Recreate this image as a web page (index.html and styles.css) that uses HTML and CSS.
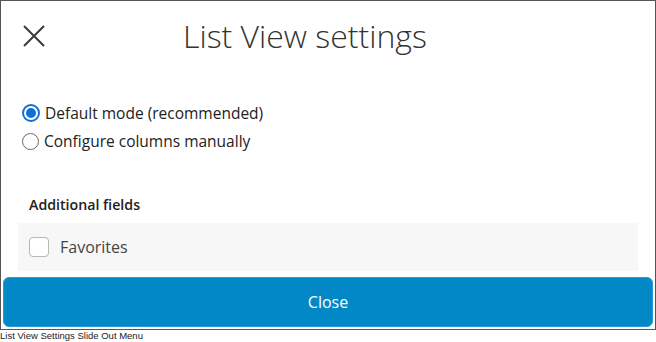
FILE: index.html
```html
<!DOCTYPE html>
<html>
<head>
<meta charset="utf-8">
<link rel="stylesheet" href="styles.css">
</head>
<body>
<div class="frame">
  <div class="header">
    <button class="close-x" aria-label="Close">
      <svg width="22" height="22" viewBox="0 0 22 22"><path d="M1 1L21 21M21 1L1 21" stroke="#3a3a3a" stroke-width="2" fill="none"/></svg>
    </button>
    <h1 class="title">List View settings</h1>
  </div>
  <div class="radios">
    <label class="radio-row"><span class="radio checked"></span><span>Default mode (recommended)</span></label>
    <label class="radio-row"><span class="radio"></span><span>Configure columns manually</span></label>
  </div>
  <div class="section-title">Additional fields</div>
  <div class="field-row"><span class="checkbox"></span><span class="field-label">Favorites</span></div>
  <button class="close-btn">Close</button>
</div>
<div class="caption">List View Settings Slide Out Menu</div>
</body>
</html>
```
FILE: styles.css
```css
html, body { margin: 0; padding: 0; background: #fff; }
body { font-family: "Open Sans", sans-serif; color: #333; }
.frame {
  width: 656px; height: 330px; box-sizing: border-box;
  border: 1px solid #555;
  display: flex; flex-direction: column;
}
.header { margin-top: 15px; height: 40px; display: flex; align-items: center; padding-left: 22px; }
.close-x { border: 0; background: none; padding: 0; width: 22px; height: 22px; display: flex; }
.title { margin: 0 0 0 138px; font-size: 32px; font-weight: 300; line-height: 40px; color: #333; }
.radios { margin-top: 43px; padding-left: 21px; display: flex; flex-direction: column; }
.radio-row { height: 28px; display: flex; align-items: center; font-size: 15.5px; line-height: 28px; color: #222; }
.radio { width: 15px; height: 15px; border: 1.5px solid #666; border-radius: 50%; margin-right: 5px; box-sizing: content-box; flex: none; }
.radio.checked { border: 2px solid #1170d8; width: 14px; height: 14px; position: relative; }
.radio.checked::after { content: ""; position: absolute; left: 2px; top: 2px; width: 10px; height: 10px; border-radius: 50%; background: #1170d8; }
.section-title { margin-top: 40px; padding-left: 28px; font-size: 14.2px; font-weight: 600; line-height: 20px; color: #222; }
.field-row { margin: 8px 17px 0; height: 48px; background: #f7f7f7; display: flex; align-items: center; padding-left: 11px; }
.checkbox { width: 18px; height: 18px; border: 1.5px solid #b8b8b8; border-radius: 4px; background: #fff; flex: none; }
.field-label { margin-left: 11px; font-size: 16px; color: #444; }
.close-btn {
  margin: 6px 2px 0; height: 50px; border: 1px solid #2a98d4; border-radius: 6px;
  background: #0288c6; color: #fff; font-family: "Open Sans", sans-serif; font-size: 16px;
}
.caption { font-family: "Liberation Sans", Arial, sans-serif; font-size: 9.5px; line-height: 12px; color: #222; }
```
